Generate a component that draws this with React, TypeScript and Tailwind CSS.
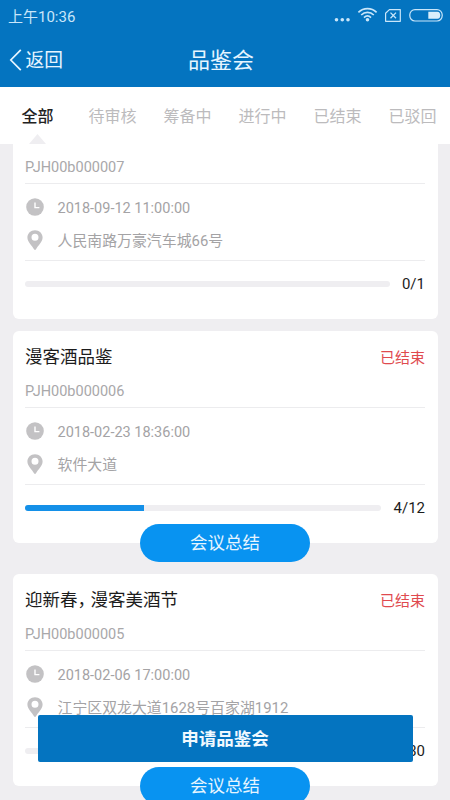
import React from 'react';
import clsx from 'clsx';

interface Tasting {
  code: string;
  title?: string;
  status?: string;
  time: string;
  address: string;
  joined: number;
  total: number;
  hasSummary: boolean;
}

const tabs = ['全部', '待审核', '筹备中', '进行中', '已结束', '已驳回'];

const tastings: Tasting[] = [
  {
    code: 'PJH00b000007',
    time: '2018-09-12 11:00:00',
    address: '人民南路万豪汽车城66号',
    joined: 0,
    total: 1,
    hasSummary: false,
  },
  {
    code: 'PJH00b000006',
    title: '漫客酒品鉴',
    status: '已结束',
    time: '2018-02-23 18:36:00',
    address: '软件大道',
    joined: 4,
    total: 12,
    hasSummary: true,
  },
  {
    code: 'PJH00b000005',
    title: '迎新春，漫客美酒节',
    status: '已结束',
    time: '2018-02-06 17:00:00',
    address: '江宁区双龙大道1628号百家湖1912',
    joined: 0,
    total: 30,
    hasSummary: true,
  },
];

const ClockIcon = () => (
  <svg width="18" height="18" viewBox="0 0 18 18" className="shrink-0">
    <circle cx="9" cy="9" r="8.8" fill="#c3c2c4" />
    <path d="M9 4.6V9.6H13.4" fill="none" stroke="#fff" strokeWidth="1.4" />
  </svg>
);

const PinIcon = () => (
  <svg width="18" height="20" viewBox="0 0 18 20" className="shrink-0">
    <path
      d="M9 0.2C4.7 0.2 1.4 3.4 1.4 7.4C1.4 12 6.2 15.6 8 19.2Q9 20.6 10 19.2C11.8 15.6 16.6 12 16.6 7.4C16.6 3.4 13.3 0.2 9 0.2ZM9 3.7A3.5 3.5 0 1 1 9 10.7A3.5 3.5 0 1 1 9 3.7Z"
      fill="#c3c2c4"
      fillRule="evenodd"
    />
  </svg>
);

const StatusBar = () => (
  <div className="flex h-8 items-center justify-between pl-2 pr-[7px] text-[#c9e6fa]">
    <span className="pt-0.5 text-[15px] leading-none">上午10:36</span>
    {/* Signal, wifi, missing SIM and battery */}
    <svg width="110" height="32" viewBox="0 0 110 32" fill="none">
      <g fill="#c9e6fa">
        <circle cx="3.5" cy="19.8" r="1.8" />
        <circle cx="9.3" cy="19.8" r="1.8" />
        <circle cx="15" cy="19.8" r="1.8" />
        <circle cx="34.5" cy="19.7" r="1.8" />
      </g>
      <g stroke="#c9e6fa" strokeWidth="1.7">
        <path d="M25.4 12.3C30.6 7.4 38.4 7.4 43.6 12.3" />
        <path d="M28.2 15C31.8 11.6 37.2 11.6 40.8 15" />
        <path d="M31 17.6C33.1 15.6 35.9 15.6 38 17.6" />
      </g>
      <g stroke="#c9e6fa" strokeWidth="1.2">
        <path d="M56.4 9.6H67.3V21.3H52.6V13.2Z" strokeLinejoin="round" />
        <path d="M57.5 12.6L63 18.2M63 12.6L57.5 18.2" strokeWidth="1.3" />
        <rect x="76.8" y="9.6" width="32.4" height="11.4" rx="5.2" />
      </g>
      <path d="M95.3 11.8H104.5Q107.2 11.8 107.2 15.3Q107.2 18.8 104.5 18.8H95.3Z" fill="#d9eefb" />
    </svg>
  </div>
);

const Header = () => (
  <header className="h-[87px] shrink-0 bg-[#0474c0]">
    <StatusBar />
    <div className="flex h-[55px] items-center text-[#e6f5ff]">
      <button className="flex w-[150px] items-center gap-[3.5px] pl-[9px] text-[18.75px] leading-none">
        <svg width="13" height="22" viewBox="0 0 13 22" fill="none" stroke="currentColor" strokeWidth="1.7">
          <path d="M11.8 0.8L1.8 11L11.8 21.2" />
        </svg>
        <span className="pt-[3px]">返回</span>
      </button>
      <h1 className="w-[142px] pt-[3px] text-center text-[22px] leading-none">品鉴会</h1>
    </div>
  </header>
);

const TabBar = () => (
  <nav className="grid h-[57px] shrink-0 grid-cols-6 bg-white">
    {tabs.map((tab, i) => (
      <div key={tab} className="flex flex-col items-center justify-between">
        <span
          className={clsx(
            'pt-[22px] text-[16px] leading-4',
            i === 0 ? 'font-medium text-[#222]' : 'text-[#bcbbbd]'
          )}
        >
          {tab}
        </span>
        {i === 0 && (
          <svg width="17" height="10" viewBox="0 0 17 10">
            <path d="M8.5 0L17 10H0Z" fill="#efeef1" />
          </svg>
        )}
      </div>
    ))}
  </nav>
);

// Full-width commas are set tighter than the other glyphs of a title
const CardTitle = ({ text }: { text: string }) => (
  <h2 className="pt-[3px] text-[17.5px] leading-none text-[#1c1c1c]">
    {text.split(/(，)/).map((part, i) => (
      <span key={i} className={part === '，' ? 'tracking-[-4.5px]' : undefined}>
        {part}
      </span>
    ))}
  </h2>
);

const TastingCard = ({ item }: { item: Tasting }) => (
  <article
    className={clsx(
      'relative h-[212px] shrink-0 rounded-md bg-white px-[12.5px]',
      item.hasSummary ? 'mb-[31px]' : 'mb-3'
    )}
  >
    <div className="flex h-[50px] items-center justify-between">
      {item.title && <CardTitle text={item.title} />}
      {item.status && <span className="pt-1 text-[15px] leading-none text-[#e04a4f]">{item.status}</span>}
    </div>
    <p className="flex h-[27px] items-start border-b border-[#ececee] pt-[3px] text-[14.5px] leading-4 text-[#a9a8aa]">
      {item.code}
    </p>
    <div className="h-[77px] border-b border-[#ececee] pl-px pt-[7px] text-[14.9px] text-[#a4a3a5]">
      <div className="flex h-8 items-center gap-[13.5px]">
        <ClockIcon />
        <span className="pt-[3px] text-[14.5px]">{item.time}</span>
      </div>
      <div className="flex h-[33px] items-center gap-[13.5px]">
        <PinIcon />
        <span className="pt-[3px]">{item.address}</span>
      </div>
    </div>
    <div className="flex h-[46px] items-center gap-3">
      <div className="h-1.5 flex-1 overflow-hidden rounded-full bg-[#efeef1]">
        <div className="h-full bg-[#1490e8]" style={{ width: `${(item.joined / item.total) * 100}%` }} />
      </div>
      <span className="pt-px text-[15px] leading-none text-[#1c1c1c]">
        {item.joined}/{item.total}
      </span>
    </div>
    {item.hasSummary && (
      <button className="absolute -bottom-[19px] left-1/2 h-[38px] w-[170px] -translate-x-1/2 rounded-full bg-[#0893f1] pt-[2px] text-[17.5px] leading-none text-[#e6f5ff]">
        会议总结
      </button>
    )}
  </article>
);

const App: React.FC = () => {
  return (
    <div className="relative flex h-[800px] w-[450px] flex-col overflow-hidden bg-[#efeef1] font-[Roboto,'Noto_Sans_CJK_SC',sans-serif]">
      <Header />
      <TabBar />
      <main className="flex min-h-0 flex-1 flex-col overflow-hidden px-[12.5px]">
        {/* List is scrolled part of the way through the first card */}
        <div className="-mt-[37px] flex flex-col">
          {tastings.map((item) => (
            <TastingCard key={item.code} item={item} />
          ))}
        </div>
      </main>
      <button className="absolute bottom-[38px] left-[37.5px] h-[47px] w-[375px] rounded-xs bg-[#0474c0] pt-[2px] text-[17.5px] font-bold leading-none text-[#f0f9ff]">
        申请品鉴会
      </button>
    </div>
  );
};

export default App;
